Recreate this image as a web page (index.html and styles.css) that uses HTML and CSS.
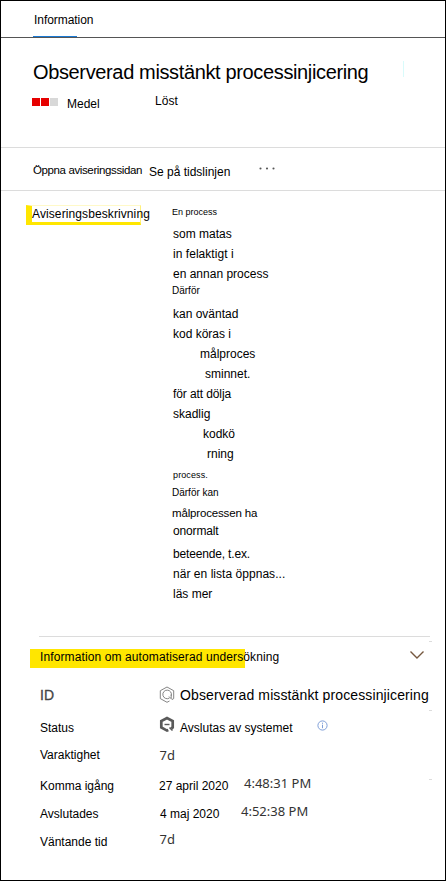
FILE: index.html
```
<!DOCTYPE html>
<html lang="sv">
<head>
<meta charset="utf-8">
<title>Information</title>
<link rel="stylesheet" href="styles.css">
</head>
<body>
<main class="panel">
  <nav class="tabs"><span class="tab">Information</span></nav>

  <header class="head">
    <h1 class="title">Observerad misstänkt processinjicering</h1>
    <i class="divider"></i>
    <div class="meta">
      <span class="severity"><i class="on"></i><i class="on"></i><i></i></span>
      <span class="level">Medel</span>
      <span class="state">Löst</span>
    </div>
  </header>

  <div class="actions">
    <span class="open">Öppna aviseringssidan</span>
    <span class="timeline">Se på tidslinjen</span>
    <svg class="more" width="18" height="4" viewBox="0 0 18 4" fill="#555"><circle cx="2.500" cy="1.500" r="1.050"/><circle cx="9" cy="1.500" r="1.050"/><circle cx="15.500" cy="1.500" r="1.050"/></svg>
  </div>

  <section class="description">
    <h2 class="label">Aviseringsbeskrivning</h2>
    <div class="text">
      <p class="tiny first">En process</p>
      <p>som matas</p>
      <p class="w1">in felaktigt i</p>
      <p>en annan process</p>
      <p class="small">Därför</p>
      <p>kan oväntad</p>
      <p>kod köras i</p>
      <p class="in1">målproces</p>
      <p class="in2">sminnet.</p>
      <p class="w2">för att dölja</p>
      <p>skadlig</p>
      <p class="in3">kodkö</p>
      <p class="in4">rning</p>
      <p class="tiny proc">process.</p>
      <p class="small therefore">Därför kan</p>
      <p class="target">målprocessen ha</p>
      <p class="abnormal">onormalt</p>
      <p class="w3">beteende, t.ex.</p>
      <p class="w1">när en lista öppnas...</p>
      <p>läs mer</p>
    </div>
  </section>

  <section class="investigation">
    <div class="bar">
      <h2 class="heading">Information om automatiserad undersökning</h2>
      <svg class="chevron" width="16" height="10" viewBox="0 0 16 10" fill="none" stroke="#76583f" stroke-width="1.4"><path d="M1.5 1.5 8 8l6.5-6.5"/></svg>
    </div>
    <dl class="facts">
      <div class="row r-id">
        <dt>ID</dt>
        <dd>
          <svg class="icon" width="16" height="17" viewBox="0 0 16 17" fill="none" stroke="#777" stroke-width=".9"><path d="M10.500 15 8 16.300 1.300 12.600V4.700L8 1l6.700 3.700v7.900l-1.700.9"/><path d="M10.500 12A4.300 4.300 0 1 1 12.200 9.800"/><path d="M10 10.500 13 13.500M12.200 8.500v4"/></svg>
          <span>Observerad misstänkt processinjicering</span>
        </dd>
      </div>
      <div class="row r-status">
        <dt>Status</dt>
        <dd>
          <svg class="icon" width="16" height="17" viewBox="0 0 16 17" fill="none" stroke="#5a5a5a"><path d="M9.300 14 8 14.600 2.300 11.500V5L8 2l5.700 3v6.500l-1.500.9" stroke-width="2.700"/><path d="M10.500 11.500l3 3" stroke-width="1.600"/><path d="M5.500 8.500h5" stroke-width="1.400"/></svg>
          <span class="val">Avslutas av systemet</span>
          <svg class="info" width="11" height="11" viewBox="0 0 11 11" fill="none" stroke="#7f9fd8"><circle cx="5.500" cy="5.500" r="4.600"/><path d="M5.500 4.700v3.500M5.500 2.700v1.100"/></svg>
        </dd>
      </div>
      <div class="row r-dur"><dt>Varaktighet</dt><dd><span class="seg">7d</span></dd></div>
      <div class="row r-start"><dt>Komma igång</dt><dd><span class="date">27 april 2020</span><span class="seg up">4:48:31 PM</span></dd></div>
      <div class="row r-end"><dt>Avslutades</dt><dd><span class="date">4 maj 2020</span><span class="seg up">4:52:38 PM</span></dd></div>
      <div class="row r-wait"><dt>Väntande tid</dt><dd><span class="seg up">7d</span></dd></div>
    </dl>
    <i class="tick t1"></i><i class="tick t2"></i><i class="tick t3"></i>
  </section>
</main>
</body>
</html>
```
FILE: styles.css
```
* { box-sizing: border-box; margin: 0; padding: 0; }
body { background: #fff; }
h1, h2 { font-weight: normal; }
svg { display: block; flex: none; }

.panel {
  width: 446px;
  height: 881px;
  border: 1px solid #000;
  overflow: hidden;
  color: #000;
  font: 12px/16px "Liberation Sans", Arial, sans-serif;
  white-space: nowrap;
}

.tabs { height: 37px; padding: 11px 0 0 32px; border-bottom: 1px solid #555; }
.tab { display: block; width: 44px; height: 25px; padding-left: 1px; border-bottom: 1px solid #1a7ad4; letter-spacing: -.05px; }

.head { position: relative; height: 110px; padding: 22px 0 0 32px; border-bottom: 1px solid #dcdcdc; }
.title { font-size: 20px; line-height: 24px; letter-spacing: -.36px; }
.divider { position: absolute; left: 402px; top: 23px; width: 1px; height: 16px; background: #d9fbfb; }
.meta { display: flex; padding-top: 9px; margin-left: -1px; }
.severity { display: flex; gap: 1px; padding-top: 5px; width: 35px; }
.severity i { width: 8px; height: 8px; background: #d8d8d8; }
.severity .on { background: #e60000; }
.level { width: 88px; padding-top: 3px; }
.state { letter-spacing: .05px; }

.actions { display: flex; height: 43px; padding: 14px 0 0 32px; border-bottom: 1px solid #dcdcdc; }
.open { width: 116px; font-size: 11.5px; letter-spacing: -.38px; }
.timeline { width: 109px; padding-top: 2px; }
.more { margin-top: 5px; }

.description { display: flex; height: 445px; padding: 13px 0 0 25px; }
.label { width: 115px; height: 20px; margin-top: 1px; border: solid #ffe600; border-width: 1px 1px 3px 6px; border-top-color: #fff9c8; border-right-color: #fff07a; font-size: 12px; line-height: 16px; letter-spacing: .1px; }
.text { margin-left: 32px; line-height: 20px; }
.text .tiny { font-size: 9px; }
.text .small { height: 20px; font-size: 10px; line-height: 14px; margin-left: -1px; }
.text .first { height: 20px; line-height: 16px; margin-left: -1px; }
.text .w1 { letter-spacing: .04px; }
.text .w2 { letter-spacing: -.1px; }
.text .w3 { letter-spacing: -.16px; }
.text .in1 { margin-left: 27px; }
.text .in2 { margin-left: 32px; }
.text .in3 { margin-left: 30px; }
.text .in4 { margin-left: 34px; }
.text .proc { height: 20px; line-height: 22px; letter-spacing: .12px; }
.text .therefore { height: 19px; line-height: 18px; }
.text .target { height: 18px; margin-left: -1px; font-size: 11.5px; letter-spacing: -.16px; }
.text .abnormal { height: 23px; letter-spacing: -.15px; }

.investigation { position: relative; margin: 0 0 0 38px; }
.bar { display: flex; justify-content: space-between; width: 391px; height: 49px; padding: 12px 5px 0 0; border-top: 1px solid #dcdcdc; }
.heading { width: 215px; height: 19px; margin-left: -9px; padding-left: 10px; background: #ffe600; font-size: 12px; line-height: 16px; letter-spacing: .11px; }
.chevron { margin-top: 1px; }

.facts { line-height: 20px; padding-left: 1px; }
.row { display: flex; align-items: flex-start; }
.row dt { width: 119px; }
.row dd { display: flex; align-items: flex-start; }
.icon { margin-right: 5px; }
.r-id { height: 33px; font-size: 14px; }
.r-id dt { color: #444; -webkit-text-stroke: .3px #444; }
.r-id dd { letter-spacing: .12px; }
.r-id .icon { margin-top: 1px; }
.r-status { height: 27px; }
.r-status .icon { margin-top: -2px; }
.val { width: 137px; }
.info { margin-top: 2px; }
.r-dur { height: 31px; }
.r-start, .r-end, .r-wait { height: 28px; }
.date { width: 85px; }
.r-end .date { width: 82px; padding-left: 1px; }
.seg { font: 13px/20px "Noto Sans", sans-serif; color: #333; }
.r-dur .seg, .r-wait .seg { padding-left: .5px; }
.up { margin-top: -3px; }
.tick { position: absolute; left: 390px; width: 3px; height: 1px; background: #dcdcdc; }
.t1 { top: 5px; }
.t2 { top: 74px; }
.t3 { top: 143px; }
```
